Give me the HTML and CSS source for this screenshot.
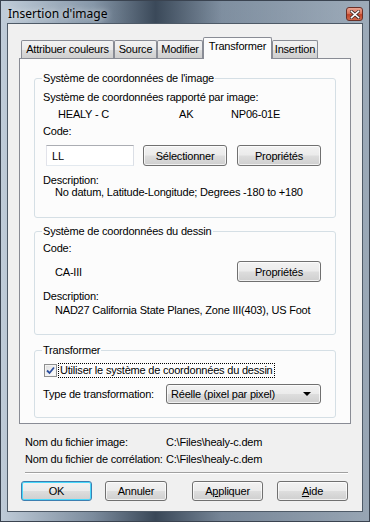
FILE: index.html
```html
<!DOCTYPE html>
<html lang="fr">
<head>
  <meta charset="UTF-8">
  <title>Insertion d'image</title>
  <link rel="stylesheet" href="styles.css">
</head>
<body>
  <div class="window">
    <div class="titlebar">
      <span class="title">Insertion d'image</span>
      <span class="close">
        <svg viewBox="0 0 10 9" width="10" height="9">
          <path d="M1.5 1.5 L8.5 7.5 M8.5 1.5 L1.5 7.5" stroke="#3a2a28" stroke-width="3" stroke-linecap="square"/>
          <path d="M1.5 1.5 L8.5 7.5 M8.5 1.5 L1.5 7.5" stroke="#fff" stroke-width="1.6" stroke-linecap="square"/>
        </svg>
      </span>
    </div>

    <div class="client">
      <div class="tabs">
        <div class="tab tab-colors">Attribuer couleurs</div>
        <div class="tab tab-source">Source</div>
        <div class="tab tab-edit">Modifier</div>
        <div class="tab tab-transform active">Transformer</div>
        <div class="tab tab-insert">Insertion</div>
      </div>

      <div class="panel">
        <fieldset class="group group-image">
          <legend>Système de coordonnées de l'image</legend>
          <div class="line first">Système de coordonnées rapporté par image:</div>
          <div class="line reported">
            <span class="col-name">HEALY - C</span>
            <span class="col-state">AK</span>
            <span>NP06-01E</span>
          </div>
          <div class="line">Code:</div>
          <div class="code-row">
            <input class="field" type="text" value="LL">
            <button class="btn btn-select">Sélectionner</button>
            <button class="btn btn-props">Propriétés</button>
          </div>
          <div class="desc">
            <div>Description:</div>
            <div class="indent">No datum, Latitude-Longitude; Degrees -180 to +180</div>
          </div>
        </fieldset>

        <fieldset class="group group-drawing">
          <legend>Système de coordonnées du dessin</legend>
          <div class="line first">Code:</div>
          <div class="code-row">
            <span class="indent code-value">CA-III</span>
            <button class="btn btn-props">Propriétés</button>
          </div>
          <div class="desc desc-drawing">
            <div>Description:</div>
            <div class="indent">NAD27 California State Planes, Zone III(403), US Foot</div>
          </div>
        </fieldset>

        <fieldset class="group group-transform">
          <legend>Transformer</legend>
          <div class="check-row">
            <span class="checkbox">
              <svg viewBox="0 0 9 9" width="9" height="9">
                <path d="M1 4.5 L3.5 7 L8 1.5" fill="none" stroke="#2c4f9e" stroke-width="1.8"/>
              </svg>
            </span>
            <span class="check-label">Utiliser le système de coordonnées du dessin</span>
          </div>
          <div class="select-row">
            <span class="select-label">Type de transformation:</span>
            <div class="select">
              <span>Réelle (pixel par pixel)</span>
              <span class="arrow"></span>
            </div>
          </div>
        </fieldset>
      </div>

      <div class="files">
        <div class="file-row"><span class="file-label">Nom du fichier image:</span><span>C:\Files\healy-c.dem</span></div>
        <div class="file-row"><span class="file-label">Nom du fichier de corrélation:</span><span>C:\Files\healy-c.dem</span></div>
      </div>

      <div class="separator"></div>

      <div class="buttons">
        <button class="btn btn-default btn-ok">OK</button>
        <button class="btn btn-cancel">Annuler</button>
        <button class="btn btn-apply">A<u>p</u>pliquer</button>
        <button class="btn btn-help"><u>A</u>ide</button>
      </div>
    </div>
  </div>
</body>
</html>
```

FILE: styles.css
```css
* {
  margin: 0;
  padding: 0;
  box-sizing: border-box;
}

html, body {
  width: 370px;
  height: 522px;
  overflow: hidden;
  font-family: 'Liberation Sans', Arial, sans-serif;
  font-size: 11px;
  letter-spacing: -0.2px;
  color: #000;
}

.window {
  width: 370px;
  height: 522px;
  padding: 0 6px 9px 6px;
  display: flex;
  flex-direction: column;
  background:
    linear-gradient(90deg, rgba(198, 210, 222, 0.9) 0%, rgba(120, 136, 152, 0.2) 25%, rgba(50, 64, 80, 0.9) 42%, rgba(110, 124, 140, 0.4) 60%, rgba(170, 182, 194, 0.6) 100%),
    linear-gradient(180deg, #8a9bad 0%, #7c8c9e 100%);
  border: 1px solid #3a4350;
}

.titlebar {
  height: 22px;
  display: flex;
  align-items: center;
  justify-content: space-between;
}

.title {
  font-family: 'Noto Sans', sans-serif;
  font-size: 12px;
  letter-spacing: 0;
  margin-left: 1px;
  margin-top: 3px;
  text-shadow: 0 0 6px rgba(255, 255, 255, 0.9);
}

.close {
  width: 17px;
  height: 14px;
  margin-top: 4px;
  margin-right: 0;
  border: 1px solid #6a3028;
  border-radius: 3px;
  background: linear-gradient(180deg, #e9a493 0%, #d9745a 45%, #c04228 55%, #cf6a4c 100%);
  display: flex;
  align-items: center;
  justify-content: center;
}

.client {
  flex: 1;
  min-width: 0;
  background: #f0f0f0;
  border: 1px solid #4e5a67;
  padding: 13px 11px 0 11px;
  display: flex;
  flex-direction: column;
}

/* onglets */
.tabs {
  display: flex;
  align-items: flex-end;
  height: 21px;
  padding-left: 2px;
  position: relative;
  z-index: 1;
}

.tab {
  height: 18px;
  line-height: 17px;
  text-align: center;
  border: 1px solid #898c95;
  border-bottom: none;
  border-radius: 2px 2px 0 0;
  background: linear-gradient(180deg, #f2f2f2 0%, #ebebeb 50%, #dddddd 51%, #cfcfcf 100%);
}

.tab-colors { width: 93px; }
.tab-source { width: 43px; }
.tab-edit { width: 46px; }
.tab-transform { width: 69px; }
.tab-insert { width: 46px; }

.tab.active {
  height: 22px;
  line-height: 16px;
  background: #fcfcfc;
  position: relative;
  top: 1px;
}

.panel {
  height: 366px;
  min-width: 0;
  border: 1px solid #898c95;
  background: #fcfcfc;
  padding: 13px 14px 0 14px;
}

/* groupes */
.group {
  min-width: 0;
  border: 1px solid #d5dfe5;
  border-radius: 3px;
  padding: 0 8px;
}

.group legend {
  padding: 0 1px;
  line-height: 13px;
  margin-left: -1px;
}

.line {
  line-height: 13px;
  margin-top: 4px;
}

.line.first {
  margin-top: 6px;
}

.indent {
  padding-left: 12px;
}

.reported {
  display: flex;
  padding-left: 15px;
}

.col-name {
  width: 121px;
}

.col-state {
  width: 52px;
}

.code-row {
  display: flex;
  align-items: center;
  margin-top: 7px;
  height: 21px;
}

.field {
  width: 88px;
  height: 21px;
  margin-left: 3px;
  border: 1px solid #abadb3;
  border-left-color: #e2e3ea;
  border-right-color: #dbdfe6;
  border-bottom-color: #e3e9ef;
  background: #fff;
  padding: 0 5px;
  font-family: inherit;
  font-size: 11px;
  letter-spacing: inherit;
  outline: none;
}

.btn {
  height: 21px;
  border: 1px solid #707070;
  border-radius: 3px;
  background: linear-gradient(180deg, #f2f2f2 0%, #ebebeb 48%, #dddddd 52%, #cfcfcf 100%);
  box-shadow: inset 0 0 0 1px rgba(255, 255, 255, 0.7);
  font-family: inherit;
  font-size: 11px;
  letter-spacing: inherit;
  color: #000;
}

.btn-select {
  width: 84px;
  margin-left: 9px;
}

.btn-props {
  width: 84px;
  margin-left: 10px;
}

.code-value {
  width: 184px;
}

.desc {
  margin-top: 8px;
  line-height: 12px;
  padding-bottom: 19px;
}

.desc-drawing {
  margin-top: 8px;
  line-height: 13px;
  padding-bottom: 17px;
}

.desc-drawing .indent {
  margin-top: 1px;
}

.group-drawing {
  margin-top: 7px;
}

.group-drawing .line.first {
  margin-top: 4px;
}

.group-drawing .code-row {
  margin-top: 6px;
}

.group-transform {
  margin-top: 9px;
  padding-bottom: 13px;
}

.check-row {
  display: flex;
  align-items: center;
  margin-top: 6px;
  margin-left: 1px;
  height: 15px;
}

.checkbox {
  width: 13px;
  height: 13px;
  border: 1px solid #8e8f8f;
  background: linear-gradient(135deg, #dcdcdc 0%, #f4f4f4 60%, #ffffff 100%);
  box-shadow: inset 0 0 0 1px #f4f4f4;
  display: flex;
  align-items: center;
  justify-content: center;
}

.check-label {
  margin-left: 1px;
  padding: 0 1px;
  line-height: 13px;
  border: 1px dotted #000;
}

.select-row {
  display: flex;
  align-items: center;
  margin-top: 6px;
}

.select-label {
  width: 123px;
}

.select {
  width: 155px;
  height: 20px;
  border: 1px solid #707070;
  border-radius: 3px;
  background: linear-gradient(180deg, #f2f2f2 0%, #ebebeb 48%, #dddddd 52%, #cfcfcf 100%);
  box-shadow: inset 0 0 0 1px rgba(255, 255, 255, 0.7);
  display: flex;
  align-items: center;
  justify-content: space-between;
  padding: 0 9px 0 4px;
}

.arrow {
  width: 0;
  height: 0;
  border-left: 4px solid transparent;
  border-right: 4px solid transparent;
  border-top: 4px solid #000;
}

/* bas de la boîte */
.files {
  margin-top: 12px;
  padding-left: 6px;
}

.file-row {
  display: flex;
  line-height: 13px;
  margin-bottom: 4px;
}

.file-label {
  min-width: 141px;
  padding-right: 3px;
  white-space: nowrap;
}

.separator {
  margin: 2px 3px 0 6px;
  height: 2px;
  border-top: 1px solid #a0a0a0;
  border-bottom: 1px solid #ffffff;
}

.buttons {
  display: flex;
  margin-top: 7px;
  padding-left: 2px;
}

.buttons .btn {
  height: 20px;
}

.btn-ok {
  width: 71px;
}

.btn-default {
  border-color: #3c7fb1;
  box-shadow: inset 0 0 0 1px #48d8fb;
}

.btn-cancel {
  width: 62px;
  margin-left: 13px;
}

.btn-apply {
  width: 71px;
  margin-left: 25px;
}

.btn-help {
  width: 71px;
  margin-left: 14px;
}
```
